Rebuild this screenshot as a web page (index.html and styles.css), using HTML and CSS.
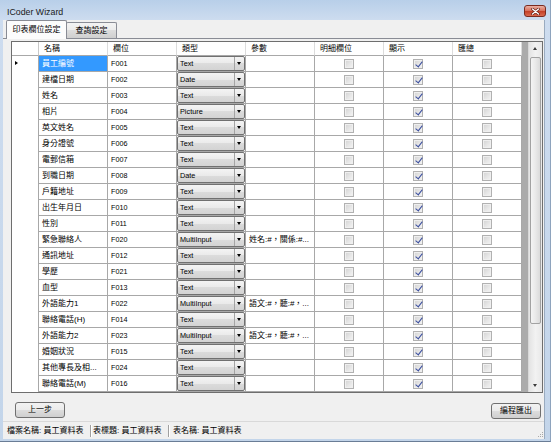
FILE: index.html
```html
<!DOCTYPE html>
<html lang="zh-Hant">
<head>
<meta charset="utf-8">
<title>ICoder Wizard</title>
<link rel="stylesheet" href="styles.css">
</head>
<body>
<div class="window">
  <div class="titlebar">
    <span class="title">ICoder Wizard</span>
    <div class="close">
      <svg width="9" height="7" viewBox="0 0 9 7"><path d="M1.5 1 L7.5 6 M7.5 1 L1.5 6" stroke="#5a1a12" stroke-width="2.6" stroke-linecap="round"/><path d="M1.5 1 L7.5 6 M7.5 1 L1.5 6" stroke="#fff" stroke-width="1.4" stroke-linecap="round"/></svg>
    </div>
  </div>
  <div class="client">
    <div class="tabs">
      <div class="tab active t1">印表欄位設定</div>
      <div class="tab t2">查詢設定</div>
    </div>
    <div class="page">
      <div class="grid">
        <div class="gbody">
          <div class="hrow">
            <div class="h rh"></div>
            <div class="h">名稱</div>
            <div class="h">欄位</div>
            <div class="h">類型</div>
            <div class="h">參數</div>
            <div class="h">明細欄位</div>
            <div class="h">顯示</div>
            <div class="h">匯總</div>
          </div>
          <div class="row"><div class="rh cur"></div><div class="c sel">員工編號</div><div class="c code">F001</div><div class="c type"><div class="combo"><span>Text</span><i></i></div></div><div class="c"></div><div class="c chk"><span class="cb"></span></div><div class="c chk"><span class="cb on"></span></div><div class="c chk"><span class="cb"></span></div></div>
          <div class="row"><div class="rh"></div><div class="c">建檔日期</div><div class="c code">F002</div><div class="c type"><div class="combo"><span>Date</span><i></i></div></div><div class="c"></div><div class="c chk"><span class="cb"></span></div><div class="c chk"><span class="cb on"></span></div><div class="c chk"><span class="cb"></span></div></div>
          <div class="row"><div class="rh"></div><div class="c">姓名</div><div class="c code">F003</div><div class="c type"><div class="combo"><span>Text</span><i></i></div></div><div class="c"></div><div class="c chk"><span class="cb"></span></div><div class="c chk"><span class="cb on"></span></div><div class="c chk"><span class="cb"></span></div></div>
          <div class="row"><div class="rh"></div><div class="c">相片</div><div class="c code">F004</div><div class="c type"><div class="combo"><span>Picture</span><i></i></div></div><div class="c"></div><div class="c chk"><span class="cb"></span></div><div class="c chk"><span class="cb on"></span></div><div class="c chk"><span class="cb"></span></div></div>
          <div class="row"><div class="rh"></div><div class="c">英文姓名</div><div class="c code">F005</div><div class="c type"><div class="combo"><span>Text</span><i></i></div></div><div class="c"></div><div class="c chk"><span class="cb"></span></div><div class="c chk"><span class="cb on"></span></div><div class="c chk"><span class="cb"></span></div></div>
          <div class="row"><div class="rh"></div><div class="c">身分證號</div><div class="c code">F006</div><div class="c type"><div class="combo"><span>Text</span><i></i></div></div><div class="c"></div><div class="c chk"><span class="cb"></span></div><div class="c chk"><span class="cb on"></span></div><div class="c chk"><span class="cb"></span></div></div>
          <div class="row"><div class="rh"></div><div class="c">電郵信箱</div><div class="c code">F007</div><div class="c type"><div class="combo"><span>Text</span><i></i></div></div><div class="c"></div><div class="c chk"><span class="cb"></span></div><div class="c chk"><span class="cb on"></span></div><div class="c chk"><span class="cb"></span></div></div>
          <div class="row"><div class="rh"></div><div class="c">到職日期</div><div class="c code">F008</div><div class="c type"><div class="combo"><span>Date</span><i></i></div></div><div class="c"></div><div class="c chk"><span class="cb"></span></div><div class="c chk"><span class="cb on"></span></div><div class="c chk"><span class="cb"></span></div></div>
          <div class="row"><div class="rh"></div><div class="c">戶籍地址</div><div class="c code">F009</div><div class="c type"><div class="combo"><span>Text</span><i></i></div></div><div class="c"></div><div class="c chk"><span class="cb"></span></div><div class="c chk"><span class="cb on"></span></div><div class="c chk"><span class="cb"></span></div></div>
          <div class="row"><div class="rh"></div><div class="c">出生年月日</div><div class="c code">F010</div><div class="c type"><div class="combo"><span>Text</span><i></i></div></div><div class="c"></div><div class="c chk"><span class="cb"></span></div><div class="c chk"><span class="cb on"></span></div><div class="c chk"><span class="cb"></span></div></div>
          <div class="row"><div class="rh"></div><div class="c">性別</div><div class="c code">F011</div><div class="c type"><div class="combo"><span>Text</span><i></i></div></div><div class="c"></div><div class="c chk"><span class="cb"></span></div><div class="c chk"><span class="cb on"></span></div><div class="c chk"><span class="cb"></span></div></div>
          <div class="row"><div class="rh"></div><div class="c">緊急聯絡人</div><div class="c code">F020</div><div class="c type"><div class="combo"><span>MultiInput</span><i></i></div></div><div class="c">姓名:#，關係:#...</div><div class="c chk"><span class="cb"></span></div><div class="c chk"><span class="cb on"></span></div><div class="c chk"><span class="cb"></span></div></div>
          <div class="row"><div class="rh"></div><div class="c">通訊地址</div><div class="c code">F012</div><div class="c type"><div class="combo"><span>Text</span><i></i></div></div><div class="c"></div><div class="c chk"><span class="cb"></span></div><div class="c chk"><span class="cb on"></span></div><div class="c chk"><span class="cb"></span></div></div>
          <div class="row"><div class="rh"></div><div class="c">學歷</div><div class="c code">F021</div><div class="c type"><div class="combo"><span>Text</span><i></i></div></div><div class="c"></div><div class="c chk"><span class="cb"></span></div><div class="c chk"><span class="cb on"></span></div><div class="c chk"><span class="cb"></span></div></div>
          <div class="row"><div class="rh"></div><div class="c">血型</div><div class="c code">F013</div><div class="c type"><div class="combo"><span>Text</span><i></i></div></div><div class="c"></div><div class="c chk"><span class="cb"></span></div><div class="c chk"><span class="cb on"></span></div><div class="c chk"><span class="cb"></span></div></div>
          <div class="row"><div class="rh"></div><div class="c">外語能力1</div><div class="c code">F022</div><div class="c type"><div class="combo"><span>MultiInput</span><i></i></div></div><div class="c">語文:#，聽:#，...</div><div class="c chk"><span class="cb"></span></div><div class="c chk"><span class="cb on"></span></div><div class="c chk"><span class="cb"></span></div></div>
          <div class="row"><div class="rh"></div><div class="c">聯絡電話(H)</div><div class="c code">F014</div><div class="c type"><div class="combo"><span>Text</span><i></i></div></div><div class="c"></div><div class="c chk"><span class="cb"></span></div><div class="c chk"><span class="cb on"></span></div><div class="c chk"><span class="cb"></span></div></div>
          <div class="row"><div class="rh"></div><div class="c">外語能力2</div><div class="c code">F023</div><div class="c type"><div class="combo"><span>MultiInput</span><i></i></div></div><div class="c">語文:#，聽:#，...</div><div class="c chk"><span class="cb"></span></div><div class="c chk"><span class="cb on"></span></div><div class="c chk"><span class="cb"></span></div></div>
          <div class="row"><div class="rh"></div><div class="c">婚姻狀況</div><div class="c code">F015</div><div class="c type"><div class="combo"><span>Text</span><i></i></div></div><div class="c"></div><div class="c chk"><span class="cb"></span></div><div class="c chk"><span class="cb on"></span></div><div class="c chk"><span class="cb"></span></div></div>
          <div class="row"><div class="rh"></div><div class="c">其他專長及相...</div><div class="c code">F024</div><div class="c type"><div class="combo"><span>Text</span><i></i></div></div><div class="c"></div><div class="c chk"><span class="cb"></span></div><div class="c chk"><span class="cb on"></span></div><div class="c chk"><span class="cb"></span></div></div>
          <div class="row"><div class="rh"></div><div class="c">聯絡電話(M)</div><div class="c code">F016</div><div class="c type"><div class="combo"><span>Text</span><i></i></div></div><div class="c"></div><div class="c chk"><span class="cb"></span></div><div class="c chk"><span class="cb on"></span></div><div class="c chk"><span class="cb"></span></div></div>
        </div>
        <div class="vscroll">
          <div class="sbtn up"></div>
          <div class="thumb"></div>
          <div class="track"></div>
          <div class="sbtn down"></div>
        </div>
      </div>
      <div class="btnrow">
        <button class="btn">上一步</button>
        <button class="btn right">編程匯出</button>
      </div>
    </div>
    <div class="status">
      <div class="seg s1">檔案名稱: 員工資料表</div>
      <div class="seg s2">表標題: 員工資料表</div>
      <div class="seg s3">表名稱: 員工資料表</div>
      <svg class="grip" width="7" height="7" viewBox="0 0 7 7"><g fill="#a9a9a9"><rect x="5" y="1" width="1" height="1"/><rect x="3" y="3" width="1" height="1"/><rect x="5" y="3" width="1" height="1"/><rect x="1" y="5" width="1" height="1"/><rect x="3" y="5" width="1" height="1"/><rect x="5" y="5" width="1" height="1"/></g></svg>
    </div>
  </div>
</div>
</body>
</html>
```

FILE: styles.css
```css
* { box-sizing: border-box; }

body {
  margin: 0;
  background: #ffffff;
  font-family: "Liberation Sans", "Noto Sans CJK TC", sans-serif;
  font-size: 8px;
  color: #000;
}

.window {
  width: 551px;
  height: 442px;
  padding: 0 5px 2px 3px;
  display: flex;
  flex-direction: column;
  background: linear-gradient(to bottom, #b8cfe9 0px, #cddcef 20px, #c3d5ea 100%);
  border-bottom: 1px solid #6a7d96;
  border-right: 1px solid #8ea3bd;
}

.titlebar {
  height: 20px;
  display: flex;
  justify-content: space-between;
  align-items: flex-start;
  padding-left: 4px;
  flex-shrink: 0;
}

.title {
  font-size: 8.8px;
  line-height: 10px;
  padding-top: 7px;
  color: #1a1a1a;
}

.close {
  width: 22px;
  height: 12px;
  margin-top: 5px;
  margin-right: -1px;
  border: 1px solid #7a2b20;
  border-radius: 3px;
  background: linear-gradient(to bottom, #eab1a4 0%, #d9735f 45%, #c54229 55%, #d9694f 100%);
  display: flex;
  align-items: center;
  justify-content: center;
}

.client {
  flex: 1;
  display: flex;
  flex-direction: column;
  background: #f0f0f0;
  border-right: 1px solid #9aabbf;
}

.tabs {
  height: 18px;
  display: flex;
  align-items: flex-end;
  padding-left: 3px;
  flex-shrink: 0;
}

.tab {
  height: 16px;
  border: 1px solid #898c95;
  border-bottom: none;
  border-radius: 2px 2px 0 0;
  background: linear-gradient(to bottom, #f3f3f3 0%, #ebebeb 50%, #dddddd 50%, #cfcfcf 100%);
  font-size: 8px;
  line-height: 15px;
  text-align: center;
}

.tab.t1 { width: 61px; }
.tab.t2 { width: 51px; margin-left: -1px; }

.tab.active {
  height: 19px;
  margin-bottom: -1px;
  background: #fcfcfc;
  position: relative;
  z-index: 1;
  line-height: 17px;
}

.page {
  height: 383px;
  border-top: 1px solid #898c95;
  padding: 2px 0 0 8px;
  flex-shrink: 0;
}

.grid {
  width: 532px;
  height: 352px;
  border: 1px solid #6e6e6e;
  display: flex;
}

.gbody {
  width: 516px;
  background: #ababab;
  overflow: hidden;
}

.hrow, .row {
  display: flex;
  width: 510px;
}

.hrow { height: 14px; }
.row { height: 16px; }

.h {
  width: 69px;
  background: #fff;
  border-right: 1px solid #dcdcdc;
  border-bottom: 1px solid #a8a8a8;
  padding-left: 5px;
  line-height: 13px;
  font-size: 8px;
  white-space: nowrap;
}

.h.rh { width: 27px; padding: 0; border-right: 1px solid #c8c8c8; }

.rh {
  width: 27px;
  background: #fff;
  border-right: 1px solid #a8a8a8;
  position: relative;
  flex-shrink: 0;
}

.rh.cur::after {
  content: "";
  position: absolute;
  left: 3px;
  top: 5px;
  border-top: 2.5px solid transparent;
  border-bottom: 2.5px solid transparent;
  border-left: 3px solid #000;
}

.c {
  width: 69px;
  flex-shrink: 0;
  background: #fff;
  border-right: 1px solid #a8a8a8;
  border-bottom: 1px solid #a8a8a8;
  padding-left: 3px;
  line-height: 15px;
  white-space: nowrap;
  overflow: hidden;
}

.c.sel {
  background: #3399ff;
  color: #fff;
}

.c.code { font-size: 7.2px; }

.c.type { padding: 0; }

.combo {
  height: 15px;
  border: 1px solid #707070;
  border-radius: 2px;
  background: linear-gradient(to bottom, #f4f4f4 0%, #eaeaea 50%, #dcdcdc 50%, #d3d3d3 100%);
  display: flex;
}

.combo span {
  flex: 1;
  font-size: 7.3px;
  line-height: 13px;
  padding-left: 2px;
}

.combo i {
  width: 10px;
  border-left: 1px solid #a4a4a4;
  position: relative;
}

.combo i::after {
  content: "";
  position: absolute;
  left: 2px;
  top: 5px;
  border-left: 2.5px solid transparent;
  border-right: 2.5px solid transparent;
  border-top: 3px solid #000;
}

.c.chk {
  padding: 0;
  display: flex;
  align-items: center;
  justify-content: center;
}

.cb {
  width: 10px;
  height: 10px;
  border: 1px solid #b1b1b1;
  background: linear-gradient(135deg, #d2d2d2 0%, #e6e6e6 55%, #f4f4f4 100%);
  box-shadow: inset 0 0 0 1px #efefef;
  position: relative;
}

.cb.on::after {
  content: "";
  position: absolute;
  left: 3px;
  top: 0px;
  width: 3px;
  height: 6px;
  border-right: 1.6px solid #3a4e9f;
  border-bottom: 1.6px solid #3a4e9f;
  transform: rotate(38deg);
}

.vscroll {
  width: 14px;
  display: flex;
  flex-direction: column;
  background: linear-gradient(to right, #e3e3e3, #f2f2f2 50%, #e8e8e8);
  border-left: 1px solid #d8d8d8;
}

.sbtn {
  height: 14px;
  position: relative;
  flex-shrink: 0;
}

.sbtn.up::after, .sbtn.down::after {
  content: "";
  position: absolute;
  left: 4px;
  border-left: 2.5px solid transparent;
  border-right: 2.5px solid transparent;
}

.sbtn.up::after { top: 5px; border-bottom: 3px solid #3c3c3c; }
.sbtn.down::after { top: 6px; border-top: 3px solid #3c3c3c; }

.thumb {
  height: 267px;
  margin: 1px 1px 0 1px;
  border: 1px solid #a2a2a2;
  border-radius: 2px;
  background: linear-gradient(to right, #f4f4f4, #e9e9e9 50%, #dadada);
  flex-shrink: 0;
}

.track { flex: 1; }

.btnrow {
  width: 532px;
  margin-top: 9px;
  padding: 0 2px 0 4px;
  display: flex;
  justify-content: space-between;
  align-items: flex-start;
}

.btn {
  width: 50px;
  height: 16px;
  margin: 0;
  padding: 0;
  border: 1px solid #707070;
  border-radius: 3px;
  background: linear-gradient(to bottom, #f2f2f2 0%, #ebebeb 50%, #dddddd 50%, #cfcfcf 100%);
  font-family: "Liberation Sans", "Noto Sans CJK TC", sans-serif;
  font-size: 8px;
  line-height: 14px;
  color: #000;
  text-align: center;
}

.btn.right { margin-top: 1px; }

.status {
  height: 18px;
  flex-shrink: 0;
  border-top: 1px solid #d9d9d9;
  display: flex;
  align-items: center;
  font-size: 8px;
}

.seg {
  position: relative;
  white-space: nowrap;
  line-height: 12px;
}

.seg.s1 { width: 88px; padding-left: 4px; }
.seg.s2 { width: 78px; padding-left: 2px; }
.seg.s3 { padding-left: 4px; }

.seg.s1::after, .seg.s2::after {
  content: "";
  position: absolute;
  right: 0;
  top: 0;
  width: 1px;
  height: 12px;
  background: #a0a0a0;
  box-shadow: 1px 0 0 #ffffff;
}

.grip {
  margin-left: auto;
  margin-right: 0;
  align-self: flex-end;
  margin-bottom: 1px;
}
```
